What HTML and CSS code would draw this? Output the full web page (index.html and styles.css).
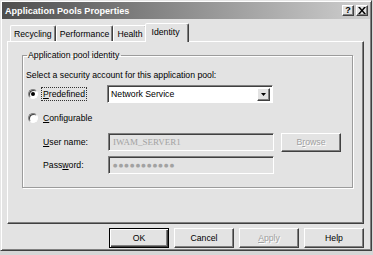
FILE: index.html
```html
<!DOCTYPE html>
<html>
<head>
<meta charset="utf-8">
<link rel="stylesheet" href="styles.css">
</head>
<body>
<div class="window">
  <div class="titlebar">
    <span class="title">Application Pools Properties</span>
    <div class="tb-buttons">
      <span class="tb-btn">?</span>
      <span class="tb-btn close">
        <svg width="8" height="7" viewBox="0 0 8 7"><path d="M0 0h2l2 2.5L6 0h2L5 3.5 8 7H6L4 4.5 2 7H0l3-3.5z" fill="#000"/></svg>
      </span>
    </div>
  </div>
  <div class="client">
    <div class="tabs">
      <div class="tab">Recycling</div>
      <div class="tab">Performance</div>
      <div class="tab">Health</div>
      <div class="tab selected">Identity</div>
    </div>
    <div class="panel">
      <fieldset class="group">
        <legend>Application pool identity</legend>
        <div class="intro">Select a security account for this application pool:</div>
        <div class="row">
          <span class="radio checked"></span>
          <span class="rlabel focus"><u>P</u>redefined</span>
          <div class="select">
            <span class="select-text">Network Service</span>
            <span class="arrow"><svg width="5" height="3" viewBox="0 0 5 3"><path d="M0 0h5L2.5 3z" fill="#000"/></svg></span>
          </div>
        </div>
        <div class="row">
          <span class="radio"></span>
          <span class="rlabel"><u>C</u>onfigurable</span>
        </div>
        <div class="frow first">
          <span class="flabel"><u>U</u>ser name:</span>
          <div class="textbox">IWAM_SERVER1</div>
          <div class="btn browse disabled">B<u>r</u>owse</div>
        </div>
        <div class="frow">
          <span class="flabel">Pass<u>w</u>ord:</span>
          <div class="textbox dots">●●●●●●●●●●●</div>
        </div>
      </fieldset>
    </div>
    <div class="buttons">
      <div class="btn default">OK</div>
      <div class="btn">Cancel</div>
      <div class="btn disabled"><u>A</u>pply</div>
      <div class="btn">Help</div>
    </div>
  </div>
</div>
</body>
</html>
```

FILE: styles.css
```css
* { box-sizing: border-box; }
html, body { margin: 0; padding: 0; background: #d6d6d6; }
body {
  font-family: "Liberation Sans", Arial, sans-serif;
  font-size: 8.7px;
  color: #000;
}
.window {
  width: 372px;
  height: 251px;
  background: #e3e3e3;
  border: 1px solid;
  border-color: #e6e6e6 #404040 #404040 #e6e6e6;
  box-shadow: inset 1px 1px 0 #fff, inset -1px -1px 0 #808080;
  padding: 1px;
  display: flex;
  flex-direction: column;
}
.titlebar {
  height: 17px;
  background: linear-gradient(to right, #4e4e4e, #cfcfcf);
  display: flex;
  align-items: center;
  justify-content: space-between;
  padding: 0 2px 0 3px;
}
.title {
  color: #fff;
  font-weight: bold;
  font-size: 9.1px;
}
.tb-buttons { display: flex; gap: 2px; }
.tb-btn {
  width: 12px;
  height: 11px;
  background: #e3e3e3;
  border: 1px solid;
  border-color: #fff #404040 #404040 #fff;
  box-shadow: inset -1px -1px 0 #808080;
  font-weight: bold;
  font-size: 9px;
  line-height: 9px;
  display: flex;
  align-items: center;
  justify-content: center;
}
.client {
  flex: 1;
  display: flex;
  flex-direction: column;
  padding: 4px 6px 0 5px;
}
.tabs {
  display: flex;
  height: 18px;
  padding-left: 3px;
  position: relative;
  z-index: 1;
}
.tab {
  margin-top: 2px;
  height: 16px;
  padding: 0 3px;
  border: 1px solid;
  border-bottom: none;
  border-color: #fff #404040 transparent #fff;
  box-shadow: inset -1px 0 0 #808080;
  border-radius: 2px 2px 0 0;
  display: flex;
  align-items: center;
}
.tab.selected {
  margin-top: 0;
  height: 19px;
  margin-left: -2px;
  padding: 3px 8px 0 6px;
  background: #e3e3e3;
  align-items: flex-start;
}
.panel {
  height: 183px;
  border: 1px solid;
  border-color: #fff #404040 #404040 #fff;
  box-shadow: inset -1px -1px 0 #808080;
  padding: 8px 10px 0 14px;
}
.group {
  margin: 0;
  height: 138px;
  border: 1px solid #9c9c9c;
  box-shadow: 1px 1px 0 #fff, inset 1px 1px 0 #fff;
  padding: 8px 0 0 3px;
}
.group legend {
  padding: 0 2px 0 1px;
  margin-left: 1px;
}
.intro { height: 14px; line-height: 14px; }
.row {
  display: flex;
  align-items: center;
  height: 20px;
  margin-top: 2px;
}
.row + .row { margin-top: 4px; }
.radio {
  width: 10px;
  height: 10px;
  border-radius: 50%;
  background: #fff;
  border: 1px solid;
  border-color: #808080 #fff #fff #808080;
  box-shadow: inset 1px 1px 0 #404040;
  margin-left: 2px;
  display: flex;
  align-items: center;
  justify-content: center;
}
.radio.checked::after {
  content: "";
  width: 4px;
  height: 4px;
  border-radius: 50%;
  background: #000;
}
.rlabel {
  margin-left: 3px;
  padding: 1px 1px;
  border: 1px dotted transparent;
}
.rlabel.focus { border-color: #333; }
.select {
  margin-left: 20px;
  width: 166px;
  height: 18px;
  background: #fff;
  border: 1px solid;
  border-color: #808080 #fff #fff #808080;
  box-shadow: inset 1px 1px 0 #404040;
  display: flex;
  align-items: center;
  justify-content: space-between;
  padding: 2px 2px 2px 3px;
}
.arrow {
  width: 13px;
  height: 13px;
  background: #e3e3e3;
  border: 1px solid;
  border-color: #fff #404040 #404040 #fff;
  box-shadow: inset -1px -1px 0 #808080;
  display: flex;
  align-items: center;
  justify-content: center;
}
.frow {
  display: flex;
  align-items: center;
  height: 18px;
  margin-top: 5px;
  padding-left: 17px;
}
.frow.first { margin-top: 5px; }
.flabel { width: 65px; }
.textbox {
  width: 166px;
  height: 18px;
  border: 1px solid;
  border-color: #808080 #fff #fff #808080;
  box-shadow: inset 1px 1px 0 #404040;
  color: #a2a2a2;
  font-family: "Liberation Serif", serif;
  font-size: 9px;
  padding: 0 4px;
  display: flex;
  align-items: center;
}
.textbox.dots { font-family: "DejaVu Sans", sans-serif; font-size: 5px; letter-spacing: 1.3px; }
.btn {
  width: 60px;
  height: 20px;
  border: 1px solid;
  border-color: #fff #404040 #404040 #fff;
  box-shadow: inset -1px -1px 0 #808080;
  display: flex;
  align-items: center;
  justify-content: center;
}
.btn.disabled { color: #a0a0a0; text-shadow: 1px 1px 0 #fff; }
.btn.browse { margin-left: 7px; height: 19px; }
.btn.default {
  border-color: #000;
  box-shadow: inset 1px 1px 0 #fff, inset -1px -1px 0 #404040, inset -2px -2px 0 #808080;
}
.buttons {
  display: flex;
  justify-content: flex-end;
  gap: 5px;
  margin-top: 4px;
}
```
